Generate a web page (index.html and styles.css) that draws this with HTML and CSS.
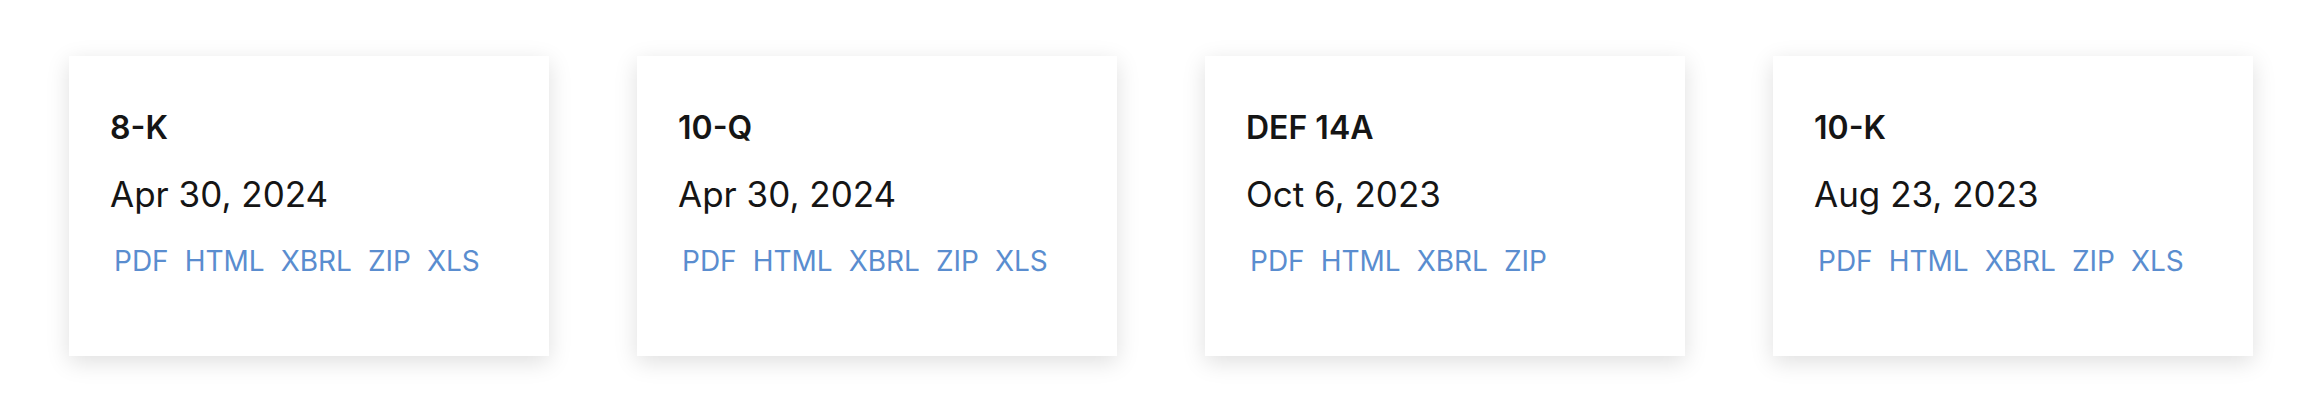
FILE: index.html
```html
<!DOCTYPE html>
<html lang="en">
<head>
  <meta charset="UTF-8">
  <meta name="viewport" content="width=device-width, initial-scale=1.0">
  <title>Filings</title>
  <link rel="stylesheet" href="styles.css">
</head>
<body>
  <section class="filings">
    <div class="filing">
      <h3>8-K</h3>
      <p class="fecha">Apr 30, 2024</p>
      <div class="formatos">
        <a href="#">PDF</a>
        <a href="#">HTML</a>
        <a href="#">XBRL</a>
        <a href="#">ZIP</a>
        <a href="#">XLS</a>
      </div>
    </div>
    <div class="filing">
      <h3>10-Q</h3>
      <p class="fecha">Apr 30, 2024</p>
      <div class="formatos">
        <a href="#">PDF</a>
        <a href="#">HTML</a>
        <a href="#">XBRL</a>
        <a href="#">ZIP</a>
        <a href="#">XLS</a>
      </div>
    </div>
    <div class="filing">
      <h3>DEF 14A</h3>
      <p class="fecha">Oct 6, 2023</p>
      <div class="formatos">
        <a href="#">PDF</a>
        <a href="#">HTML</a>
        <a href="#">XBRL</a>
        <a href="#">ZIP</a>
      </div>
    </div>
    <div class="filing">
      <h3>10-K</h3>
      <p class="fecha">Aug 23, 2023</p>
      <div class="formatos">
        <a href="#">PDF</a>
        <a href="#">HTML</a>
        <a href="#">XBRL</a>
        <a href="#">ZIP</a>
        <a href="#">XLS</a>
      </div>
    </div>
  </section>
</body>
</html>
```
FILE: styles.css
```css
body {
  font-family: Inter, "Noto Sans", sans-serif;
  background-color: #ffffff;
  margin: 0;
  padding: 0;
  color: #151515;
}
.filings {
  display: grid;
  grid-template-columns: repeat(4, 1fr);
  gap: 88px;
  padding: 56px 71px 64px 69px;
}
.filing {
  background-color: #ffffff;
  height: 300px;
  box-sizing: border-box;
  padding: 48px 40px 0 41px;
  box-shadow: 0 6px 22px rgba(0, 0, 0, 0.13);
}
.filing h3 {
  margin: 0;
  font-size: 32px;
  font-weight: 600;
  line-height: 48px;
}
.filing .fecha {
  margin: 18px 0 0;
  font-size: 35px;
  line-height: 48px;
}
.formatos {
  display: flex;
  gap: 8px;
  margin-top: 23px;
}
.formatos a {
  color: #5a8dcf;
  text-decoration: none;
  font-size: 28px;
  line-height: 40px;
  padding: 0 4px;
}
```
